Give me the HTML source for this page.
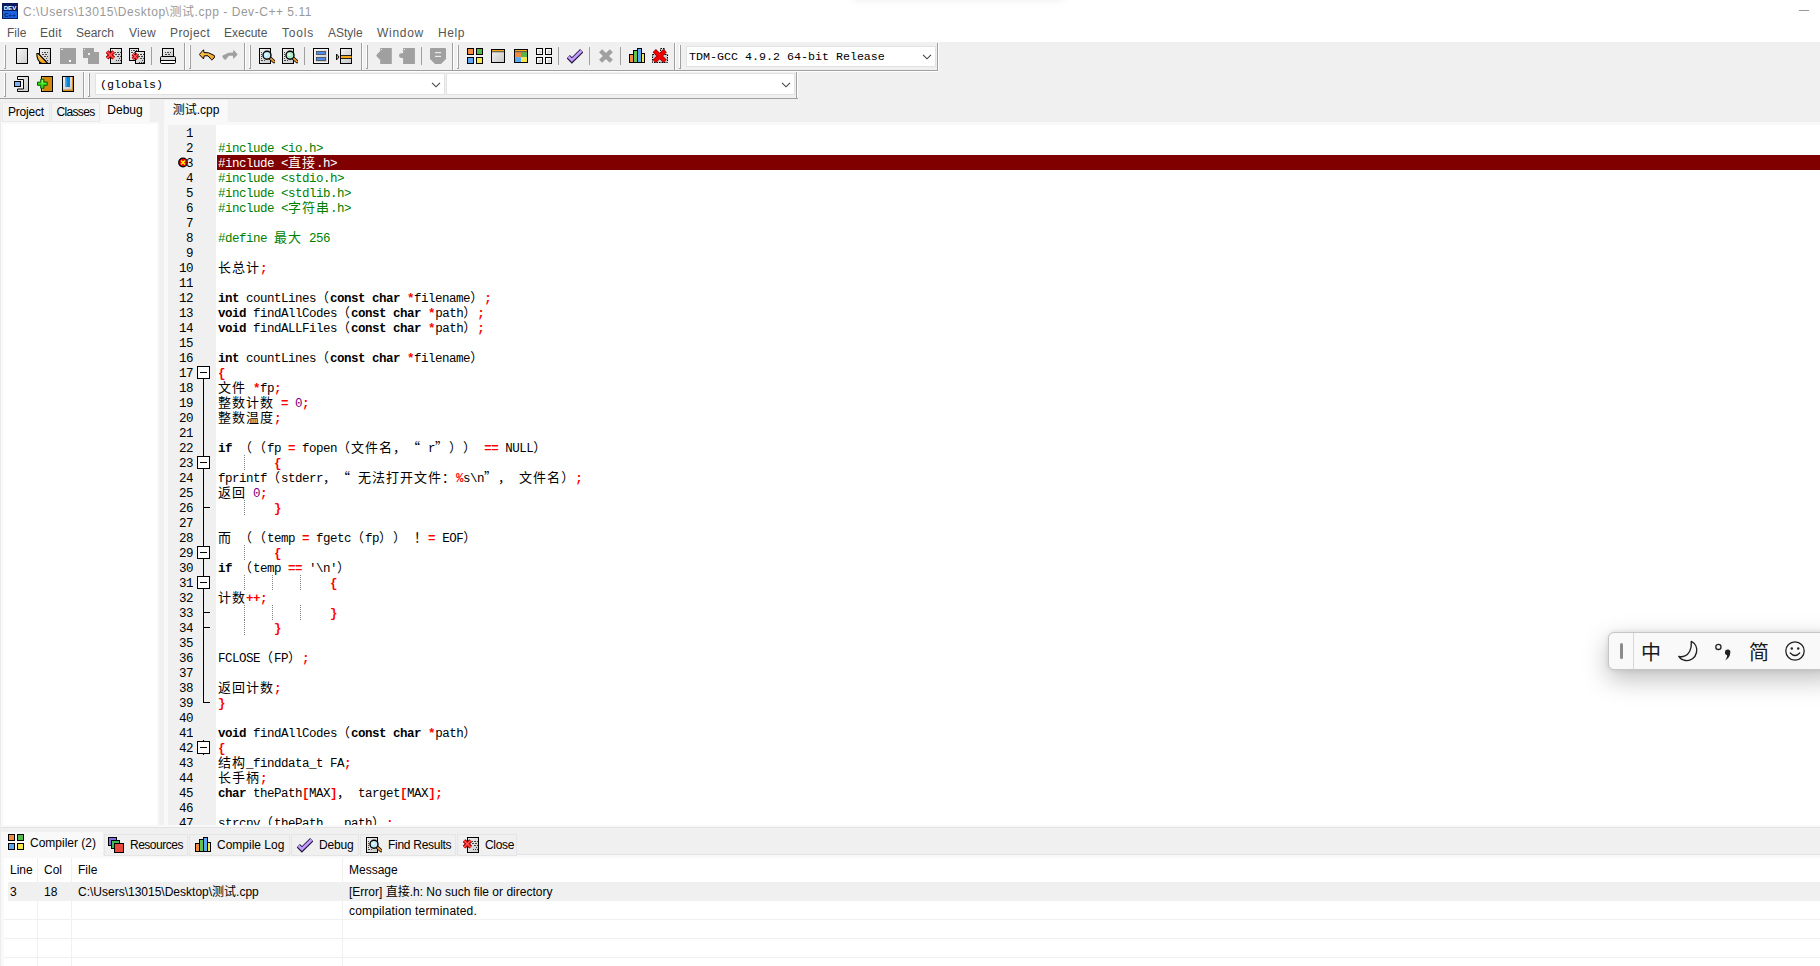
<!DOCTYPE html>
<html lang="zh">
<head>
<meta charset="utf-8">
<title>Dev-C++ 5.11</title>
<style>
*{box-sizing:border-box;margin:0;padding:0}
html,body{width:1820px;height:966px;overflow:hidden;background:#fff}
body{position:relative;font-family:"Liberation Sans","Noto Sans CJK SC",sans-serif;font-size:12px;color:#000}
.abs{position:absolute}
/* title + menu */
#title{left:23px;top:4px;height:16px;line-height:16px;color:#999;font-size:12px;white-space:nowrap;letter-spacing:.54px}
#menu{left:0;top:22px;height:19px;width:1820px;white-space:nowrap}
#menu span{position:absolute;top:4px;line-height:15px;color:#555;font-size:12px}
#minz{left:1799px;top:10px;width:10px;height:1px;background:#999}
/* toolbars */
#tbbg{left:0;top:41px;width:1820px;height:81px;background:#f0f0f0}
.tbline{background:#a0a0a0;height:1px}
.grip{width:1px;background:#a0a0a0}
.sep{width:1px;background:#a0a0a0;height:18px}
.ic{width:16px;height:16px}
.combo{background:#fff;border:1px solid #e2e2e2;font-family:"Liberation Mono",monospace;font-size:11.67px;line-height:19px;padding-left:4px;white-space:nowrap;color:#000}
/* panels */
.tab{border:1px solid #e9e9e9;background:#f4f4f4;text-align:center;line-height:19px;font-size:12px;white-space:nowrap}
.tab.on{background:#f9f9f9;border-color:#f6f6f6;border-bottom-color:#f9f9f9}
/* editor */
#gutter{left:168px;top:125px;width:48px;height:700px;background:#f0f0f0;overflow:hidden}
#nums{left:168px;top:127px;width:25px;height:698px;overflow:hidden;text-align:right;font-family:"Liberation Mono",monospace;font-size:12.5px;letter-spacing:-0.5px;line-height:15px}
#nums div{height:15px}
#code{left:216px;top:127px;width:1604px;height:698px;overflow:hidden;font-family:"Liberation Mono",monospace;font-size:12.5px;letter-spacing:-0.5px;line-height:15px;color:#000}
#code .ln{height:15px;padding-left:2px;white-space:pre}
#code .ln *{line-height:0}
#code .c{font-family:"Noto Sans CJK SC",sans-serif;font-size:13px;letter-spacing:1px;text-spacing-trim:space-all;font-kerning:none;font-feature-settings:"halt" 0,"palt" 0,"chws" 0,"kern" 0}
#code .p{display:inline-block;width:14px;letter-spacing:0;overflow:visible;white-space:pre}
#code .g{color:#008000}
#code .w{color:#fff}
#code b{font-weight:bold}
#code i{font-style:normal;font-weight:bold;color:#ff0000}
#code u{text-decoration:none;color:#800080}
.fold{width:13px;height:13px;border:1px solid #000;background:#fff}
.fold:after{content:"";position:absolute;left:2px;top:5px;width:7px;height:1px;background:#000}
.vl{width:1px;background:#000}
.hk{height:1px;width:6px;background:#000}
.guide{width:1px;height:15px;background-image:linear-gradient(#808080 50%,transparent 50%);background-size:1px 2px}
/* bottom */
.bt{font-size:12px;line-height:16px;white-space:nowrap}
#ime{left:1608px;top:632px;width:230px;height:38px;background:#f9f9f9;border:1px solid #c6c6c6;border-radius:6px;box-shadow:0 9px 26px rgba(0,0,0,.26),0 0 5px rgba(0,0,0,.10)}
#ime .bar{position:absolute;left:11px;top:10px;width:3px;height:16px;border-radius:1.5px;background:#8a8a8a}
#ime .dv{position:absolute;left:24px;top:0;width:1px;height:36px;background:#d6d6d6}
#ime span{position:absolute;top:6px;font-size:20px;line-height:26px;color:#1a1a1a;font-family:"Noto Sans CJK SC",sans-serif}
.btab{border:1px solid #e5e5e5;background:#f0f0f0;line-height:22px;font-size:12px;white-space:nowrap;height:24px}
.cell{white-space:nowrap;font-size:12px;line-height:19px;height:19px}
.hline{height:1px;background:#f0f0f0}
.vline{width:1px;background:#f0f0f0}
</style>
</head>
<body>
<!-- title bar -->
<svg class="abs" style="left:2px;top:3px" width="16" height="16" viewBox="0 0 16 16"><rect width="16" height="16" fill="#0b1a5e"/><rect x="1" y="8" width="14" height="7" fill="#1d63e0"/><text x="8" y="6.6" font-family="Liberation Sans,sans-serif" font-weight="bold" font-size="6.2" fill="#fff" text-anchor="middle">DEV</text><text x="8" y="14" font-family="Liberation Sans,sans-serif" font-weight="bold" font-size="6.2" fill="#0b1a5e" text-anchor="middle">C++</text></svg>
<div class="abs" id="title">C:\Users\13015\Desktop\测试.cpp - Dev-C++ 5.11</div>
<div class="abs" id="minz"></div>
<div class="abs" style="left:852px;top:-12px;width:212px;height:10px;box-shadow:0 2px 8px rgba(0,0,0,.07)"></div>
<!-- menu -->
<div class="abs" id="menu">
<span style="left:7px">File</span><span style="left:40px;letter-spacing:.3px">Edit</span><span style="left:76px">Search</span><span style="left:129px;letter-spacing:.3px">View</span><span style="left:170px;letter-spacing:.4px">Project</span><span style="left:224px">Execute</span><span style="left:282px;letter-spacing:.8px">Tools</span><span style="left:328px">AStyle</span><span style="left:377px;letter-spacing:.7px">Window</span><span style="left:438px;letter-spacing:.6px">Help</span>
</div>
<!-- toolbars -->
<div class="abs" id="tbbg"></div>
<div class="abs" style="left:0;top:41px;width:1820px;height:1px;background:#fff"></div>
<div class="abs" style="left:0;top:70px;width:938px;height:1px;background:#a0a0a0"></div>
<div class="abs" style="left:0;top:71px;width:938px;height:1px;background:#fff"></div>
<div class="abs" style="left:0;top:98px;width:798px;height:1px;background:#a0a0a0"></div>
<div class="abs" style="left:4px;top:45px;width:1px;height:23px;background:#fff"></div>
<div class="abs grip" style="left:5px;top:45px;height:24px"></div>
<div class="abs" style="left:4px;top:68px;width:1px;height:1px;background:#a0a0a0"></div>
<div class="abs" style="left:189px;top:45px;width:1px;height:23px;background:#fff"></div>
<div class="abs grip" style="left:190px;top:45px;height:24px"></div>
<div class="abs" style="left:189px;top:68px;width:1px;height:1px;background:#a0a0a0"></div>
<div class="abs" style="left:249px;top:45px;width:1px;height:23px;background:#fff"></div>
<div class="abs grip" style="left:250px;top:45px;height:24px"></div>
<div class="abs" style="left:249px;top:68px;width:1px;height:1px;background:#a0a0a0"></div>
<div class="abs" style="left:366px;top:45px;width:1px;height:23px;background:#fff"></div>
<div class="abs grip" style="left:367px;top:45px;height:24px"></div>
<div class="abs" style="left:366px;top:68px;width:1px;height:1px;background:#a0a0a0"></div>
<div class="abs" style="left:457px;top:45px;width:1px;height:23px;background:#fff"></div>
<div class="abs grip" style="left:458px;top:45px;height:24px"></div>
<div class="abs" style="left:457px;top:68px;width:1px;height:1px;background:#a0a0a0"></div>
<div class="abs" style="left:679px;top:45px;width:1px;height:23px;background:#fff"></div>
<div class="abs grip" style="left:680px;top:45px;height:24px"></div>
<div class="abs" style="left:679px;top:68px;width:1px;height:1px;background:#a0a0a0"></div>
<div class="abs" style="left:184px;top:43px;width:1px;height:27px;background:#a0a0a0"></div>
<div class="abs" style="left:185px;top:43px;width:1px;height:27px;background:#fff"></div>
<div class="abs" style="left:244px;top:43px;width:1px;height:27px;background:#a0a0a0"></div>
<div class="abs" style="left:245px;top:43px;width:1px;height:27px;background:#fff"></div>
<div class="abs" style="left:361px;top:43px;width:1px;height:27px;background:#a0a0a0"></div>
<div class="abs" style="left:362px;top:43px;width:1px;height:27px;background:#fff"></div>
<div class="abs" style="left:452px;top:43px;width:1px;height:27px;background:#a0a0a0"></div>
<div class="abs" style="left:453px;top:43px;width:1px;height:27px;background:#fff"></div>
<div class="abs" style="left:674px;top:43px;width:1px;height:27px;background:#a0a0a0"></div>
<div class="abs" style="left:675px;top:43px;width:1px;height:27px;background:#fff"></div>
<div class="abs" style="left:937px;top:43px;width:1px;height:27px;background:#a0a0a0"></div>
<div class="abs" style="left:938px;top:43px;width:1px;height:27px;background:#fff"></div>
<svg class="abs" style="left:14px;top:48px" width="16" height="16" viewBox="0 0 16 16" ><defs><linearGradient id="gn" x1="0" y1="0" x2="1" y2="1"><stop offset="0" stop-color="#f4f4f4"/><stop offset="1" stop-color="#cfcfcf"/></linearGradient></defs><rect x="2.5" y="0.5" width="11" height="15" fill="url(#gn)" stroke="#000"/></svg>
<svg class="abs" style="left:36px;top:48px" width="16" height="16" viewBox="0 0 16 16" ><defs><linearGradient id="pg" x1="0" y1="0" x2="1" y2="1"><stop offset="0" stop-color="#f2f2f2"/><stop offset="1" stop-color="#c8c8c8"/></linearGradient><linearGradient id="og" x1="0" y1="0" x2="0" y2="1"><stop offset="0" stop-color="#ffd36b"/><stop offset="1" stop-color="#f39a17"/></linearGradient></defs><rect x="3.5" y="0.5" width="11" height="15" fill="url(#pg)" stroke="#000"/><rect x="6" y="4" width="1" height="1" fill="#444"/><rect x="8" y="4" width="2" height="1" fill="#444"/><rect x="11" y="4" width="1" height="1" fill="#444"/><rect x="6" y="6" width="2" height="1" fill="#444"/><rect x="9" y="6" width="2" height="1" fill="#444"/><rect x="8" y="8" width="2" height="1" fill="#444"/><rect x="11" y="8" width="1" height="1" fill="#444"/><rect x="10" y="10" width="1" height="1" fill="#444"/><rect x="7" y="12" width="1" height="1" fill="#444"/><rect x="9" y="12" width="1" height="1" fill="#444"/><rect x="11" y="12" width="1" height="1" fill="#444"/><path d="M0.8 5.5 H2.3 L11.8 15.5 H6.2 C2.5 14 0.8 11 0.8 5.5Z" fill="url(#og)" stroke="#000" stroke-width="1.1" stroke-linejoin="round"/></svg>
<svg class="abs" style="left:60px;top:48px" width="16" height="16" viewBox="0 0 16 16" ><rect x="0" y="0" width="16" height="16" fill="#a0a0a0"/><rect x="1" y="1" width="2" height="1" fill="#eee"/><rect x="9" y="12" width="2" height="2" fill="#fff"/></svg>
<svg class="abs" style="left:83px;top:48px" width="16" height="16" viewBox="0 0 16 16" ><rect x="0" y="0" width="11" height="10" fill="#a0a0a0"/><rect x="5" y="4" width="11" height="12" fill="#a0a0a0"/><rect x="1" y="1" width="1" height="1" fill="#eee"/><rect x="5" y="5" width="2" height="2" fill="#eee"/></svg>
<svg class="abs" style="left:106px;top:48px" width="16" height="16" viewBox="0 0 16 16" ><defs><linearGradient id="pg" x1="0" y1="0" x2="1" y2="1"><stop offset="0" stop-color="#f2f2f2"/><stop offset="1" stop-color="#c8c8c8"/></linearGradient><linearGradient id="og" x1="0" y1="0" x2="0" y2="1"><stop offset="0" stop-color="#ffd36b"/><stop offset="1" stop-color="#f39a17"/></linearGradient></defs><rect x="4.5" y="0.5" width="11" height="15" fill="url(#pg)" stroke="#000"/><rect x="9" y="4" width="1" height="1" fill="#444"/><rect x="11" y="4" width="2" height="1" fill="#444"/><rect x="14" y="4" width="1" height="1" fill="#444"/><rect x="9" y="6" width="2" height="1" fill="#444"/><rect x="12" y="6" width="2" height="1" fill="#444"/><rect x="11" y="8" width="2" height="1" fill="#444"/><rect x="14" y="8" width="1" height="1" fill="#444"/><rect x="13" y="10" width="1" height="1" fill="#444"/><rect x="10" y="12" width="1" height="1" fill="#444"/><rect x="12" y="12" width="1" height="1" fill="#444"/><rect x="14" y="12" width="1" height="1" fill="#444"/><path d="M1.1 3.6 L7.7 10.2 M7.7 3.6 L1.1 10.2" stroke="#7a0000" stroke-width="3.8"/><path d="M1.1 3.6 L7.7 10.2 M7.7 3.6 L1.1 10.2" stroke="#ff1a1a" stroke-width="2.2"/><path d="M1.1 3.6 L7.7 10.2 M7.7 3.6 L1.1 10.2" stroke="#ff8a8a" stroke-width="0.77"/></svg>
<svg class="abs" style="left:129px;top:48px" width="16" height="16" viewBox="0 0 16 16" ><defs><linearGradient id="pg" x1="0" y1="0" x2="1" y2="1"><stop offset="0" stop-color="#f2f2f2"/><stop offset="1" stop-color="#c8c8c8"/></linearGradient><linearGradient id="og" x1="0" y1="0" x2="0" y2="1"><stop offset="0" stop-color="#ffd36b"/><stop offset="1" stop-color="#f39a17"/></linearGradient></defs><rect x="0.5" y="0.5" width="9" height="12" fill="url(#pg)" stroke="#000"/><rect x="6.5" y="3.5" width="9" height="12" fill="url(#pg)" stroke="#000"/><rect x="2" y="2" width="1" height="1" fill="#444"/><rect x="4" y="2" width="2" height="1" fill="#444"/><rect x="7" y="2" width="1" height="1" fill="#444"/><rect x="2" y="4" width="2" height="1" fill="#444"/><rect x="5" y="4" width="2" height="1" fill="#444"/><rect x="9" y="6" width="1" height="1" fill="#444"/><rect x="11" y="6" width="2" height="1" fill="#444"/><rect x="14" y="6" width="1" height="1" fill="#444"/><rect x="9" y="8" width="2" height="1" fill="#444"/><rect x="12" y="8" width="2" height="1" fill="#444"/><rect x="11" y="10" width="2" height="1" fill="#444"/><rect x="14" y="10" width="1" height="1" fill="#444"/><rect x="13" y="12" width="1" height="1" fill="#444"/><rect x="10" y="14" width="1" height="1" fill="#444"/><rect x="12" y="14" width="1" height="1" fill="#444"/><rect x="14" y="14" width="1" height="1" fill="#444"/><path d="M3.8 6.1 L8.6 10.9 M8.6 6.1 L3.8 10.9" stroke="#7a0000" stroke-width="3.4"/><path d="M3.8 6.1 L8.6 10.9 M8.6 6.1 L3.8 10.9" stroke="#ff1a1a" stroke-width="1.8"/><path d="M3.8 6.1 L8.6 10.9 M8.6 6.1 L3.8 10.9" stroke="#ff8a8a" stroke-width="0.63"/></svg>
<svg class="abs" style="left:160px;top:48px" width="16" height="16" viewBox="0 0 16 16" ><defs><linearGradient id="pg" x1="0" y1="0" x2="1" y2="1"><stop offset="0" stop-color="#f2f2f2"/><stop offset="1" stop-color="#c8c8c8"/></linearGradient><linearGradient id="og" x1="0" y1="0" x2="0" y2="1"><stop offset="0" stop-color="#ffd36b"/><stop offset="1" stop-color="#f39a17"/></linearGradient></defs><rect x="2.5" y="0.5" width="11" height="8" fill="url(#pg)" stroke="#000"/><rect x="5" y="4" width="1" height="1" fill="#444"/><rect x="7" y="4" width="2" height="1" fill="#444"/><rect x="10" y="4" width="1" height="1" fill="#444"/><rect x="5" y="6" width="2" height="1" fill="#444"/><rect x="8" y="6" width="2" height="1" fill="#444"/><rect x="0.5" y="8.5" width="15" height="7" rx="1.2" fill="#fff" stroke="#000"/><rect x="1" y="9" width="14" height="3" fill="#dcdcdc"/><rect x="1" y="12" width="14" height="1" fill="#000"/></svg>
<svg class="abs" style="left:199px;top:48px" width="16" height="16" viewBox="0 0 16 16" ><defs><linearGradient id="pg" x1="0" y1="0" x2="1" y2="1"><stop offset="0" stop-color="#f2f2f2"/><stop offset="1" stop-color="#c8c8c8"/></linearGradient><linearGradient id="og" x1="0" y1="0" x2="0" y2="1"><stop offset="0" stop-color="#ffd36b"/><stop offset="1" stop-color="#f39a17"/></linearGradient></defs><path d="M0.3 6.5 L4.5 1.8 L5 4.6 L9.5 4.8 L15.4 7.6 Q16 9 15 10 L13.2 11.8 Q12.5 12 12 11.3 L9 7.8 L5.3 7.8 L4.5 10.9 Z" fill="url(#og)" stroke="#000" stroke-width="1" stroke-linejoin="round"/></svg>
<svg class="abs" style="left:222px;top:48px" width="16" height="16" viewBox="0 0 16 16" ><g transform="translate(16,0) scale(-1,1)"><path d="M0.3 6.5 L4.5 1.8 L5 4.6 L9.5 4.8 L15.4 7.6 Q16 9 15 10 L13.2 11.8 Q12.5 12 12 11.3 L9 7.8 L5.3 7.8 L4.5 10.9 Z" fill="#a0a0a0"/></g></svg>
<svg class="abs" style="left:259px;top:48px" width="16" height="16" viewBox="0 0 16 16" ><defs><linearGradient id="pg" x1="0" y1="0" x2="1" y2="1"><stop offset="0" stop-color="#f2f2f2"/><stop offset="1" stop-color="#c8c8c8"/></linearGradient><linearGradient id="og" x1="0" y1="0" x2="0" y2="1"><stop offset="0" stop-color="#ffd36b"/><stop offset="1" stop-color="#f39a17"/></linearGradient></defs><rect x="0.5" y="0.5" width="11" height="15" fill="url(#pg)" stroke="#000"/><rect x="2" y="4" width="1" height="1" fill="#444"/><rect x="2" y="6" width="1" height="1" fill="#444"/><rect x="2" y="8" width="1" height="1" fill="#444"/><rect x="2" y="10" width="1" height="1" fill="#444"/><rect x="2" y="12" width="2" height="1" fill="#444"/><rect x="5" y="12" width="1" height="1" fill="#444"/><path d="M11 10 L15 13.6" stroke="#000" stroke-width="3.4" stroke-linecap="round"/><path d="M11 10 L15 13.6" stroke="#f0a030" stroke-width="1.8" stroke-linecap="round"/><circle cx="8" cy="7.2" r="4" fill="#bfe9f7" stroke="#000" stroke-width="1.4"/><circle cx="7.3" cy="6.6" r="1.6" fill="#fff" opacity=".55"/></svg>
<svg class="abs" style="left:282px;top:48px" width="16" height="16" viewBox="0 0 16 16" ><defs><linearGradient id="pg" x1="0" y1="0" x2="1" y2="1"><stop offset="0" stop-color="#f2f2f2"/><stop offset="1" stop-color="#c8c8c8"/></linearGradient><linearGradient id="og" x1="0" y1="0" x2="0" y2="1"><stop offset="0" stop-color="#ffd36b"/><stop offset="1" stop-color="#f39a17"/></linearGradient></defs><rect x="0.5" y="0.5" width="11" height="15" fill="url(#pg)" stroke="#000"/><rect x="2" y="4" width="1" height="1" fill="#444"/><rect x="2" y="6" width="1" height="1" fill="#444"/><rect x="2" y="8" width="1" height="1" fill="#444"/><rect x="2" y="10" width="1" height="1" fill="#444"/><rect x="2" y="12" width="2" height="1" fill="#444"/><rect x="5" y="12" width="1" height="1" fill="#444"/><path d="M11 10 L15 13.6" stroke="#000" stroke-width="3.4" stroke-linecap="round"/><path d="M11 10 L15 13.6" stroke="#f0a030" stroke-width="1.8" stroke-linecap="round"/><circle cx="8" cy="7.2" r="4" fill="#a8ecc0" stroke="#000" stroke-width="1.4"/><circle cx="7.3" cy="6.6" r="1.6" fill="#fff" opacity=".55"/></svg>
<svg class="abs" style="left:313px;top:48px" width="16" height="16" viewBox="0 0 16 16" ><defs><linearGradient id="pg" x1="0" y1="0" x2="1" y2="1"><stop offset="0" stop-color="#f2f2f2"/><stop offset="1" stop-color="#c8c8c8"/></linearGradient><linearGradient id="og" x1="0" y1="0" x2="0" y2="1"><stop offset="0" stop-color="#ffd36b"/><stop offset="1" stop-color="#f39a17"/></linearGradient></defs><rect x="0.5" y="0.5" width="15" height="15" fill="#f4f4f4" stroke="#000"/><rect x="2" y="2" width="12" height="12" fill="url(#pg)"/><rect x="3.5" y="3.5" width="9" height="3" fill="#4b8df0" stroke="#444" stroke-width="0.8"/><rect x="3.5" y="9.5" width="9" height="3" fill="#4b8df0" stroke="#444" stroke-width="0.8"/></svg>
<svg class="abs" style="left:336px;top:48px" width="16" height="16" viewBox="0 0 16 16" ><defs><linearGradient id="pg" x1="0" y1="0" x2="1" y2="1"><stop offset="0" stop-color="#f2f2f2"/><stop offset="1" stop-color="#c8c8c8"/></linearGradient><linearGradient id="og" x1="0" y1="0" x2="0" y2="1"><stop offset="0" stop-color="#ffd36b"/><stop offset="1" stop-color="#f39a17"/></linearGradient></defs><rect x="4.5" y="0.5" width="11" height="15" fill="url(#pg)" stroke="#000"/><rect x="5" y="7" width="10" height="4" fill="#222"/><rect x="5" y="8" width="10.5" height="2" fill="#f5a81c"/><path d="M0.5 6 L3 9 L0.5 12Z" fill="#f5a81c" stroke="#000" stroke-width="0.9"/></svg>
<svg class="abs" style="left:376px;top:48px" width="16" height="16" viewBox="0 0 16 16" ><path d="M4.2 0 H15.8 V16 H4.2 V12 L0.8 8.5 Q0 7.5 0.8 6.5 L4.2 3 Z" fill="#a0a0a0"/><rect x="5" y="1" width="1" height="1" fill="#eee"/></svg>
<svg class="abs" style="left:399px;top:48px" width="16" height="16" viewBox="0 0 16 16" ><path d="M4.1 0 H15.9 V16 H4.1 V10 H2.2 Q0 10 0 7.6 Q0 5.2 2.2 5.2 H4.1 Z" fill="#a0a0a0"/><rect x="5" y="1" width="1" height="1" fill="#eee"/></svg>
<svg class="abs" style="left:430px;top:48px" width="16" height="16" viewBox="0 0 16 16" ><path d="M1 0 H15 Q16 0 16 1 V11 L11 16 H5 L0 11 V1 Q0 0 1 0Z" fill="#a0a0a0"/><rect x="5" y="4" width="6" height="1.2" fill="#ececec"/><rect x="5" y="7.8" width="6" height="1.2" fill="#ececec"/></svg>
<svg class="abs" style="left:467px;top:48px" width="16" height="16" viewBox="0 0 16 16" ><rect x="0.5" y="0.5" width="6" height="6" fill="#f58a42" stroke="#000"/><rect x="9.5" y="0.5" width="6" height="6" fill="#55b84a" stroke="#000"/><rect x="0.5" y="9.5" width="6" height="6" fill="#5aa9f5" stroke="#000"/><rect x="9.5" y="9.5" width="6" height="6" fill="#f5ea4a" stroke="#000"/></svg>
<svg class="abs" style="left:490px;top:48px" width="16" height="16" viewBox="0 0 16 16" ><defs><linearGradient id="pg" x1="0" y1="0" x2="1" y2="1"><stop offset="0" stop-color="#f2f2f2"/><stop offset="1" stop-color="#c8c8c8"/></linearGradient><linearGradient id="og" x1="0" y1="0" x2="0" y2="1"><stop offset="0" stop-color="#ffd36b"/><stop offset="1" stop-color="#f39a17"/></linearGradient></defs><rect x="1.5" y="1.5" width="13" height="13" fill="url(#pg)" stroke="#000"/><rect x="2" y="2" width="12" height="1.4" fill="#ffa714"/><rect x="2" y="3.4" width="12" height="0.8" fill="#222"/></svg>
<svg class="abs" style="left:513px;top:48px" width="16" height="16" viewBox="0 0 16 16" ><rect x="1.5" y="1.5" width="13" height="13" fill="#d4d4d4" stroke="#000"/><rect x="2" y="4.2" width="6" height="5" fill="#f58a42"/><rect x="8" y="4.2" width="6" height="5" fill="#55b84a"/><rect x="2" y="9.2" width="6" height="4.8" fill="#5aa9f5"/><rect x="8" y="9.2" width="6" height="4.8" fill="#f5ea4a"/><rect x="2" y="2" width="12" height="1.4" fill="#ffa714"/><rect x="2" y="3.4" width="12" height="0.8" fill="#222"/></svg>
<svg class="abs" style="left:536px;top:48px" width="16" height="16" viewBox="0 0 16 16" ><rect x="0.5" y="0.5" width="6" height="6" fill="#fafafa" stroke="#000"/><rect x="2.5" y="2.5" width="3" height="3" fill="#d2d2d2"/><rect x="9.5" y="0.5" width="6" height="6" fill="#fafafa" stroke="#000"/><rect x="11.5" y="2.5" width="3" height="3" fill="#d2d2d2"/><rect x="0.5" y="9.5" width="6" height="6" fill="#fafafa" stroke="#000"/><rect x="2.5" y="11.5" width="3" height="3" fill="#d2d2d2"/><rect x="9.5" y="9.5" width="6" height="6" fill="#fafafa" stroke="#000"/><rect x="11.5" y="11.5" width="3" height="3" fill="#d2d2d2"/></svg>
<svg class="abs" style="left:567px;top:48px" width="16" height="16" viewBox="0 0 16 16" ><path d="M1.3 8.7 L4.9 12.4 L14.7 2.7" fill="none" stroke="#1e1438" stroke-width="4.6" stroke-linejoin="miter"/><path d="M1.5 8.7 L4.9 12.2 L14.5 2.7" fill="none" stroke="#c49cff" stroke-width="2.7" stroke-linejoin="miter"/></svg>
<svg class="abs" style="left:598px;top:48px" width="16" height="16" viewBox="0 0 16 16" ><path d="M2.6 2.8 L13.3 13.3 M13.3 2.8 L2.6 13.3" stroke="#a0a0a0" stroke-width="4.4"/></svg>
<svg class="abs" style="left:629px;top:48px" width="16" height="16" viewBox="0 0 16 16" ><rect x="0.5" y="6.5" width="4" height="8" fill="#f58a42" stroke="#000"/><rect x="4.5" y="2.5" width="4" height="12" fill="#62c24e" stroke="#000"/><rect x="8.5" y="0.5" width="4" height="14" fill="#5aa9f5" stroke="#000"/><rect x="12.5" y="5.5" width="3" height="9" fill="#f5ea4a" stroke="#000"/></svg>
<svg class="abs" style="left:652px;top:48px" width="16" height="16" viewBox="0 0 16 16" ><rect x="0.5" y="6.5" width="15" height="8" fill="#ccc" stroke="#000" stroke-dasharray="1.5 1"/><rect x="8.5" y="0.5" width="4" height="6" fill="#ccc" stroke="#000" stroke-dasharray="1.5 1"/><path d="M2.3 2.6 L13.2 13.4 M13.2 2.6 L2.3 13.4" stroke="#8a0000" stroke-width="4.6"/><path d="M2.5 2.8 L13 13.2 M13 2.8 L2.5 13.2" stroke="#f40000" stroke-width="3.3"/></svg>
<div class="abs" style="left:151px;top:47px;width:1px;height:18px;background:#a0a0a0"></div>
<div class="abs" style="left:304px;top:47px;width:1px;height:18px;background:#a0a0a0"></div>
<div class="abs" style="left:421px;top:47px;width:1px;height:18px;background:#a0a0a0"></div>
<div class="abs" style="left:558px;top:47px;width:1px;height:18px;background:#a0a0a0"></div>
<div class="abs" style="left:589px;top:47px;width:1px;height:18px;background:#a0a0a0"></div>
<div class="abs" style="left:620px;top:47px;width:1px;height:18px;background:#a0a0a0"></div>
<div class="abs combo" style="left:686px;top:46px;width:250px;height:21px;padding-left:2px;padding-top:1px">TDM-GCC 4.9.2 64-bit Release</div>
<svg class="abs" style="left:922px;top:54px" width="10" height="6" viewBox="0 0 10 6"><path d="M1 0.8 L5 4.8 L9 0.8" fill="none" stroke="#444" stroke-width="1.1"/></svg>
<div class="abs" style="left:4px;top:73px;width:1px;height:23px;background:#fff"></div>
<div class="abs grip" style="left:5px;top:73px;height:24px"></div>
<div class="abs" style="left:4px;top:96px;width:1px;height:1px;background:#a0a0a0"></div>
<div class="abs" style="left:88px;top:73px;width:1px;height:23px;background:#fff"></div>
<div class="abs grip" style="left:89px;top:73px;height:24px"></div>
<div class="abs" style="left:88px;top:96px;width:1px;height:1px;background:#a0a0a0"></div>
<div class="abs" style="left:83px;top:72px;width:1px;height:26px;background:#a0a0a0"></div>
<div class="abs" style="left:84px;top:72px;width:1px;height:26px;background:#fff"></div>
<div class="abs" style="left:796px;top:72px;width:1px;height:26px;background:#a0a0a0"></div>
<div class="abs" style="left:797px;top:72px;width:1px;height:26px;background:#fff"></div>
<svg class="abs" style="left:14px;top:76px" width="16" height="16" viewBox="0 0 16 16" ><defs><linearGradient id="pg" x1="0" y1="0" x2="1" y2="1"><stop offset="0" stop-color="#f2f2f2"/><stop offset="1" stop-color="#c8c8c8"/></linearGradient><linearGradient id="og" x1="0" y1="0" x2="0" y2="1"><stop offset="0" stop-color="#ffd36b"/><stop offset="1" stop-color="#f39a17"/></linearGradient></defs><path d="M3.5 0.5 H14.5 V15.5 H3.5 V13 H9.5 V3.5 H3.5 Z" fill="url(#pg)" stroke="#000"/><rect x="0.5" y="5.5" width="6" height="5" fill="#7fb2f5" stroke="#000"/></svg>
<svg class="abs" style="left:37px;top:76px" width="16" height="16" viewBox="0 0 16 16" ><rect x="4.5" y="0.5" width="11" height="15" fill="#cf870e" stroke="#000"/><rect x="5" y="1" width="1.2" height="14" fill="#e8b868"/><path d="M3.7 3.2 H6.9 V6.1 H10.2 V9.3 H6.9 V12.3 H3.7 V9.3 H0.5 V6.1 H3.7 Z" fill="#35df18" stroke="#0a5a00" stroke-width="1"/><path d="M4.6 4 H6 V7 H9.3 V7.6 H4.6Z" fill="#a8ff90" opacity=".7"/></svg>
<svg class="abs" style="left:60px;top:76px" width="16" height="16" viewBox="0 0 16 16" ><defs><linearGradient id="pg" x1="0" y1="0" x2="1" y2="1"><stop offset="0" stop-color="#f2f2f2"/><stop offset="1" stop-color="#c8c8c8"/></linearGradient><linearGradient id="og" x1="0" y1="0" x2="0" y2="1"><stop offset="0" stop-color="#ffd36b"/><stop offset="1" stop-color="#f39a17"/></linearGradient></defs><rect x="2.5" y="0.5" width="11" height="15" fill="#d08a1e" stroke="#000"/><rect x="3" y="1" width="9" height="12.5" fill="url(#pg)"/><rect x="5.2" y="1" width="4.8" height="10" fill="#0a84d6"/><rect x="5.2" y="1" width="1.4" height="10" fill="#4bb0f0"/></svg>
<div class="abs combo" style="left:95px;top:73px;width:350px;height:22px;padding-top:2px">(globals)</div>
<svg class="abs" style="left:431px;top:82px" width="10" height="6" viewBox="0 0 10 6"><path d="M1 0.8 L5 4.8 L9 0.8" fill="none" stroke="#444" stroke-width="1.1"/></svg>
<div class="abs combo" style="left:446px;top:73px;width:349px;height:22px"></div>
<svg class="abs" style="left:781px;top:82px" width="10" height="6" viewBox="0 0 10 6"><path d="M1 0.8 L5 4.8 L9 0.8" fill="none" stroke="#444" stroke-width="1.1"/></svg>
<!-- left panel -->
<div class="abs" style="left:0;top:99px;width:159px;height:23px;background:#f0f0f0"></div>
<div class="abs" style="left:0;top:122px;width:159px;height:705px;background:#f9f9f9"></div>
<div class="abs tab" style="left:2px;top:102px;width:48px;height:20px;letter-spacing:-.2px">Project</div>
<div class="abs tab" style="left:51px;top:102px;width:49px;height:20px;letter-spacing:-.65px">Classes</div>
<div class="abs tab on" style="left:100px;top:100px;width:50px;height:23px">Debug</div>
<div class="abs" style="left:3px;top:124px;width:154px;height:703px;background:#fff"></div>
<!-- splitter -->
<div class="abs" style="left:159px;top:99px;width:5px;height:728px;background:#f0f0f0"></div>
<!-- editor -->
<div class="abs" style="left:164px;top:99px;width:1656px;height:23px;background:#f0f0f0"></div>
<div class="abs tab on" style="left:164px;top:100px;width:64px;height:23px">测试.cpp</div>
<div class="abs" style="left:164px;top:122px;width:1656px;height:705px;background:#f9f9f9"></div>
<div class="abs" style="left:216px;top:125px;width:1604px;height:700px;background:#fff"></div>
<div class="abs" id="gutter"></div>
<div class="abs" style="left:217px;top:155px;width:1603px;height:15px;background:#800000"></div>
<div class="abs" id="nums">
<div>1</div>
<div>2</div>
<div>3</div>
<div>4</div>
<div>5</div>
<div>6</div>
<div>7</div>
<div>8</div>
<div>9</div>
<div>10</div>
<div>11</div>
<div>12</div>
<div>13</div>
<div>14</div>
<div>15</div>
<div>16</div>
<div>17</div>
<div>18</div>
<div>19</div>
<div>20</div>
<div>21</div>
<div>22</div>
<div>23</div>
<div>24</div>
<div>25</div>
<div>26</div>
<div>27</div>
<div>28</div>
<div>29</div>
<div>30</div>
<div>31</div>
<div>32</div>
<div>33</div>
<div>34</div>
<div>35</div>
<div>36</div>
<div>37</div>
<div>38</div>
<div>39</div>
<div>40</div>
<div>41</div>
<div>42</div>
<div>43</div>
<div>44</div>
<div>45</div>
<div>46</div>
<div>47</div>
</div>
<div class="abs" id="code">
<div class="ln"></div>
<div class="ln"><span class="g">#include &lt;io.h&gt;</span></div>
<div class="ln hl"><span class="w">#include &lt;<span class="c">直接</span>.h&gt;</span></div>
<div class="ln"><span class="g">#include &lt;stdio.h&gt;</span></div>
<div class="ln"><span class="g">#include &lt;stdlib.h&gt;</span></div>
<div class="ln"><span class="g">#include &lt;<span class="c">字符串</span>.h&gt;</span></div>
<div class="ln"></div>
<div class="ln"><span class="g">#define <span class="c">最大</span> 256</span></div>
<div class="ln"></div>
<div class="ln"><span class="c">长总计</span><i>;</i></div>
<div class="ln"></div>
<div class="ln"><b>int</b> countLines<span class="c p">（</span><b>const</b> <b>char</b> <i>*</i>filename<span class="c p">）</span><i>;</i></div>
<div class="ln"><b>void</b> findAllCodes<span class="c p">（</span><b>const</b> <b>char</b> <i>*</i>path<span class="c p">）</span><i>;</i></div>
<div class="ln"><b>void</b> findALLFiles<span class="c p">（</span><b>const</b> <b>char</b> <i>*</i>path<span class="c p">）</span><i>;</i></div>
<div class="ln"></div>
<div class="ln"><b>int</b> countLines<span class="c p">（</span><b>const</b> <b>char</b> <i>*</i>filename<span class="c p">）</span></div>
<div class="ln"><i>{</i></div>
<div class="ln"><span class="c">文件</span> <i>*</i>fp<i>;</i></div>
<div class="ln"><span class="c">整数计数</span> <i>=</i> <u>0</u><i>;</i></div>
<div class="ln"><span class="c">整数温度</span><i>;</i></div>
<div class="ln"></div>
<div class="ln"><b>if</b> <span class="c p">（</span><span class="c p">（</span>fp <i>=</i> fopen<span class="c p">（</span><span class="c">文件名</span><span class="c p">，</span><span class="c p">“</span> r<span class="c p">”</span><span class="c p">）</span><span class="c p">）</span> <i>==</i> NULL<span class="c p">）</span></div>
<div class="ln">        <i>{</i></div>
<div class="ln">fprintf<span class="c p">（</span>stderr<span class="c p">，</span><span class="c p">“</span> <span class="c">无法打开文件</span><span class="c p">：</span><i>%</i>s\n<span class="c p">”</span><span class="c p">，</span> <span class="c">文件名</span><span class="c p">）</span><i>;</i></div>
<div class="ln"><span class="c">返回</span> <u>0</u><i>;</i></div>
<div class="ln">        <i>}</i></div>
<div class="ln"></div>
<div class="ln"><span class="c">而</span> <span class="c p">（</span><span class="c p">（</span>temp <i>=</i> fgetc<span class="c p">（</span>fp<span class="c p">）</span><span class="c p">）</span> <span class="c p">！</span><i>=</i> EOF<span class="c p">）</span></div>
<div class="ln">        <i>{</i></div>
<div class="ln"><b>if</b> <span class="c p">（</span>temp <i>==</i> '\n'<span class="c p">）</span></div>
<div class="ln">                <i>{</i></div>
<div class="ln"><span class="c">计数</span><i>++;</i></div>
<div class="ln">                <i>}</i></div>
<div class="ln">        <i>}</i></div>
<div class="ln"></div>
<div class="ln">FCLOSE<span class="c p">（</span>FP<span class="c p">）</span><i>;</i></div>
<div class="ln"></div>
<div class="ln"><span class="c">返回计数</span><i>;</i></div>
<div class="ln"><i>}</i></div>
<div class="ln"></div>
<div class="ln"><b>void</b> findAllCodes<span class="c p">（</span><b>const</b> <b>char</b> <i>*</i>path<span class="c p">）</span></div>
<div class="ln"><i>{</i></div>
<div class="ln"><span class="c">结构</span>_finddata_t FA<i>;</i></div>
<div class="ln"><span class="c">长手柄</span><i>;</i></div>
<div class="ln"><b>char</b> thePath<i>[</i>MAX<i>]</i><span class="c p">，</span> target<i>[</i>MAX<i>];</i></div>
<div class="ln"></div>
<div class="ln">strcpy<span class="c p">（</span>thePath<span class="c p">，</span> path<span class="c p">）</span><i>;</i></div>
</div>
<div class="abs fold" style="left:197px;top:366px"></div>
<div class="abs fold" style="left:197px;top:456px"></div>
<div class="abs fold" style="left:197px;top:546px"></div>
<div class="abs fold" style="left:197px;top:576px"></div>
<div class="abs fold" style="left:197px;top:741px"></div>
<div class="abs vl" style="left:203px;top:379px;height:77px"></div>
<div class="abs vl" style="left:203px;top:469px;height:77px"></div>
<div class="abs vl" style="left:203px;top:559px;height:17px"></div>
<div class="abs vl" style="left:203px;top:589px;height:114px"></div>
<div class="abs hk" style="left:204px;top:507px"></div>
<div class="abs hk" style="left:204px;top:612px"></div>
<div class="abs hk" style="left:204px;top:627px"></div>
<div class="abs hk" style="left:204px;top:702px"></div>
<div class="abs guide" style="left:244px;top:455px"></div>
<div class="abs guide" style="left:244px;top:500px"></div>
<div class="abs guide" style="left:244px;top:545px"></div>
<div class="abs guide" style="left:244px;top:620px"></div>
<div class="abs guide" style="left:244px;top:575px"></div>
<div class="abs guide" style="left:272px;top:575px"></div>
<div class="abs guide" style="left:300px;top:575px"></div>
<div class="abs guide" style="left:244px;top:605px"></div>
<div class="abs guide" style="left:272px;top:605px"></div>
<div class="abs guide" style="left:300px;top:605px"></div>
<svg class="abs" style="left:178px;top:157px" width="10" height="11" viewBox="0 0 10 11"><circle cx="5" cy="5.5" r="4.3" fill="#f00" stroke="#000" stroke-width="1.2"/><path d="M3 3.5l4 4M7 3.5l-4 4" stroke="#ff0" stroke-width="1.4"/></svg>
<div class="abs vl" style="left:203px;top:740px;height:1px"></div><div class="abs vl" style="left:203px;top:754px;height:1px"></div>
<!-- bottom -->
<div class="abs" style="left:0;top:825px;width:1820px;height:2px;background:#f9f9f9"></div>
<div class="abs" style="left:0;top:827px;width:1820px;height:28px;background:#f0f0f0;border-top:1px solid #e3e3e3;border-bottom:1px solid #e3e3e3"></div>
<div class="abs" style="left:0;top:855px;width:1820px;height:111px;background:#fff;border-top:3px solid #f9f9f9"></div>
<div class="abs" style="left:0;top:855px;width:4px;height:111px;background:#f9f9f9"></div>
<div class="abs" style="left:1px;top:832px;width:102px;height:26px;background:#f9f9f9"></div>
<svg class="abs" style="left:8px;top:834px" width="16" height="16" viewBox="0 0 16 16" ><rect x="0.5" y="0.5" width="6" height="6" fill="#f58a42" stroke="#000"/><rect x="9.5" y="0.5" width="6" height="6" fill="#55b84a" stroke="#000"/><rect x="0.5" y="9.5" width="6" height="6" fill="#5aa9f5" stroke="#000"/><rect x="9.5" y="9.5" width="6" height="6" fill="#f5ea4a" stroke="#000"/></svg>
<div class="abs bt" style="left:30px;top:835px">Compiler (2)</div>
<div class="abs btab" style="left:104px;top:834px;width:84px;height:22px"></div>
<svg class="abs" style="left:108px;top:837px" width="16" height="16" viewBox="0 0 16 16" ><rect x="0.5" y="0.5" width="8" height="8" fill="#7d6fe0" stroke="#000"/><rect x="3.5" y="3.5" width="8" height="8" fill="#3fb75a" stroke="#000"/><rect x="6.5" y="6.5" width="9" height="9" fill="#e8483c" stroke="#000"/></svg>
<div class="abs bt" style="left:130px;top:837px;letter-spacing:-0.49px">Resources</div>
<div class="abs btab" style="left:189px;top:834px;width:101px;height:22px"></div>
<svg class="abs" style="left:195px;top:837px" width="16" height="16" viewBox="0 0 16 16" ><rect x="0.5" y="6.5" width="4" height="8" fill="#f58a42" stroke="#000"/><rect x="4.5" y="2.5" width="4" height="12" fill="#62c24e" stroke="#000"/><rect x="8.5" y="0.5" width="4" height="14" fill="#5aa9f5" stroke="#000"/><rect x="12.5" y="5.5" width="3" height="9" fill="#f5ea4a" stroke="#000"/></svg>
<div class="abs bt" style="left:217px;top:837px;letter-spacing:0px">Compile Log</div>
<div class="abs btab" style="left:291px;top:834px;width:68px;height:22px"></div>
<svg class="abs" style="left:297px;top:837px" width="16" height="16" viewBox="0 0 16 16" ><path d="M1.3 8.7 L4.9 12.4 L14.7 2.7" fill="none" stroke="#1e1438" stroke-width="4.6" stroke-linejoin="miter"/><path d="M1.5 8.7 L4.9 12.2 L14.5 2.7" fill="none" stroke="#c49cff" stroke-width="2.7" stroke-linejoin="miter"/></svg>
<div class="abs bt" style="left:319px;top:837px;letter-spacing:-0.2px">Debug</div>
<div class="abs btab" style="left:360px;top:834px;width:96px;height:22px"></div>
<svg class="abs" style="left:366px;top:837px" width="16" height="16" viewBox="0 0 16 16" ><defs><linearGradient id="pg" x1="0" y1="0" x2="1" y2="1"><stop offset="0" stop-color="#f2f2f2"/><stop offset="1" stop-color="#c8c8c8"/></linearGradient><linearGradient id="og" x1="0" y1="0" x2="0" y2="1"><stop offset="0" stop-color="#ffd36b"/><stop offset="1" stop-color="#f39a17"/></linearGradient></defs><rect x="0.5" y="0.5" width="11" height="15" fill="url(#pg)" stroke="#000"/><rect x="2" y="4" width="1" height="1" fill="#444"/><rect x="2" y="6" width="1" height="1" fill="#444"/><rect x="2" y="8" width="1" height="1" fill="#444"/><rect x="2" y="10" width="1" height="1" fill="#444"/><rect x="2" y="12" width="2" height="1" fill="#444"/><rect x="5" y="12" width="1" height="1" fill="#444"/><path d="M11 10 L15 13.6" stroke="#000" stroke-width="3.4" stroke-linecap="round"/><path d="M11 10 L15 13.6" stroke="#f0a030" stroke-width="1.8" stroke-linecap="round"/><circle cx="8" cy="7.2" r="4" fill="#bfe9f7" stroke="#000" stroke-width="1.4"/><circle cx="7.3" cy="6.6" r="1.6" fill="#fff" opacity=".55"/></svg>
<div class="abs bt" style="left:388px;top:837px;letter-spacing:-0.28px">Find Results</div>
<div class="abs btab" style="left:457px;top:834px;width:60px;height:22px"></div>
<svg class="abs" style="left:463px;top:837px" width="16" height="16" viewBox="0 0 16 16" ><defs><linearGradient id="pg" x1="0" y1="0" x2="1" y2="1"><stop offset="0" stop-color="#f2f2f2"/><stop offset="1" stop-color="#c8c8c8"/></linearGradient><linearGradient id="og" x1="0" y1="0" x2="0" y2="1"><stop offset="0" stop-color="#ffd36b"/><stop offset="1" stop-color="#f39a17"/></linearGradient></defs><rect x="4.5" y="0.5" width="11" height="15" fill="url(#pg)" stroke="#000"/><rect x="9" y="4" width="1" height="1" fill="#444"/><rect x="11" y="4" width="2" height="1" fill="#444"/><rect x="14" y="4" width="1" height="1" fill="#444"/><rect x="9" y="6" width="2" height="1" fill="#444"/><rect x="12" y="6" width="2" height="1" fill="#444"/><rect x="11" y="8" width="2" height="1" fill="#444"/><rect x="14" y="8" width="1" height="1" fill="#444"/><rect x="13" y="10" width="1" height="1" fill="#444"/><rect x="10" y="12" width="1" height="1" fill="#444"/><rect x="12" y="12" width="1" height="1" fill="#444"/><rect x="14" y="12" width="1" height="1" fill="#444"/><path d="M1.1 3.6 L7.7 10.2 M7.7 3.6 L1.1 10.2" stroke="#7a0000" stroke-width="3.8"/><path d="M1.1 3.6 L7.7 10.2 M7.7 3.6 L1.1 10.2" stroke="#ff1a1a" stroke-width="2.2"/><path d="M1.1 3.6 L7.7 10.2 M7.7 3.6 L1.1 10.2" stroke="#ff8a8a" stroke-width="0.77"/></svg>
<div class="abs bt" style="left:485px;top:837px;letter-spacing:-0.34px">Close</div>
<div class="abs cell" style="left:10px;top:861px">Line</div>
<div class="abs cell" style="left:44px;top:861px">Col</div>
<div class="abs cell" style="left:78px;top:861px">File</div>
<div class="abs cell" style="left:349px;top:861px">Message</div>
<div class="abs" style="left:8px;top:882px;width:1812px;height:19px;background:#f0f0f0"></div>
<div class="abs cell" style="left:10px;top:883px">3</div>
<div class="abs cell" style="left:44px;top:883px">18</div>
<div class="abs cell" style="left:78px;top:883px">C:\Users\13015\Desktop\测试.cpp</div>
<div class="abs cell" style="left:349px;top:883px">[Error] 直接.h: No such file or directory</div>
<div class="abs cell" style="left:349px;top:902px;letter-spacing:.17px">compilation terminated.</div>
<div class="abs hline" style="left:4px;top:919px;width:1816px"></div>
<div class="abs hline" style="left:4px;top:938px;width:1816px"></div>
<div class="abs hline" style="left:4px;top:957px;width:1816px"></div>
<div class="abs vline" style="left:37px;top:858px;height:24px"></div>
<div class="abs vline" style="left:37px;top:901px;height:65px"></div>
<div class="abs vline" style="left:71px;top:858px;height:24px"></div>
<div class="abs vline" style="left:71px;top:901px;height:65px"></div>
<div class="abs vline" style="left:342px;top:858px;height:24px"></div>
<div class="abs vline" style="left:342px;top:901px;height:65px"></div>
<div class="abs" id="ime"><div class="bar"></div><div class="dv"></div>
<span style="left:32px">中</span>
<svg class="abs" style="left:67px;top:7px" width="24" height="24" viewBox="0 0 24 24"><path d="M15.3 1.4 C19.5 3.5 21.5 8 20.5 12.5 C19.3 17.8 14.5 21.3 9.5 20.5 C6.5 20 4 18.5 2.8 16.4 C7 17.5 11.5 15.5 13.6 11.5 C15.2 8.2 15.6 4.5 15.3 1.4 Z" fill="none" stroke="#222" stroke-width="1.4" stroke-linejoin="round"/></svg>
<svg class="abs" style="left:104px;top:7px" width="26" height="26" viewBox="0 0 26 26"><circle cx="5.4" cy="6.9" r="2.6" fill="none" stroke="#222" stroke-width="1.3"/><path d="M12 12.2 a2.7 2.7 0 1 1 5.3 0.6 c-0.2 3.4 -2 6 -5.3 7.8 c1.5 -2 2.2 -3.7 2.1 -5.4 a2.7 2.7 0 0 1 -2.1 -3z" fill="#222"/></svg>
<span style="left:140px">简</span>
<svg class="abs" style="left:175px;top:7px" width="22" height="22" viewBox="0 0 22 22"><circle cx="11" cy="11" r="9.2" fill="none" stroke="#222" stroke-width="1.3"/><circle cx="7.8" cy="8.5" r="1.2" fill="#222"/><circle cx="14.2" cy="8.5" r="1.2" fill="#222"/><path d="M6.3 13 Q11 18 15.7 13" fill="none" stroke="#222" stroke-width="1.3" stroke-linecap="round"/></svg>
</div>
<div class="abs" style="left:0;top:99px;width:1px;height:867px;background:#ececec"></div>
</body>
</html>
